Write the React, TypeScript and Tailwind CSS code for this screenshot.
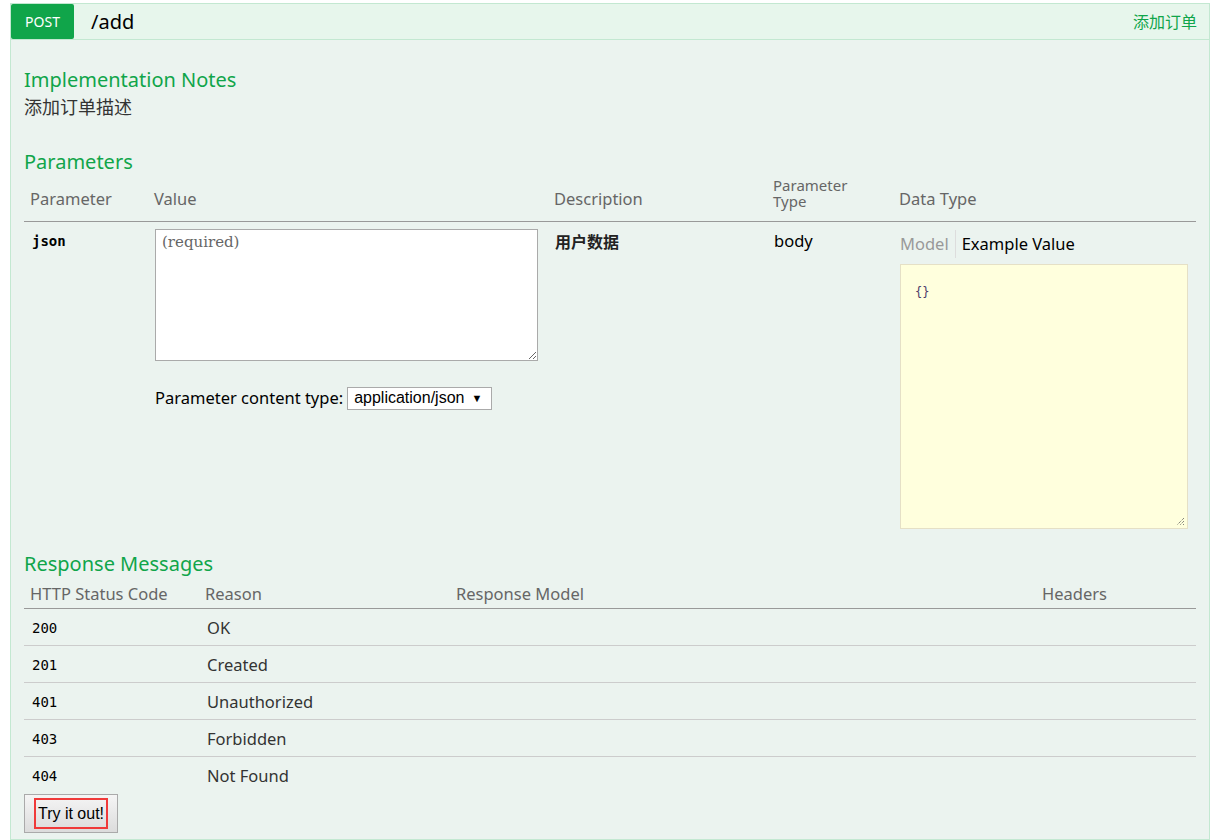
import React from 'react';

const font = { fontFamily: '"Noto Sans", "Noto Sans CJK SC", sans-serif' };
const mono = 'font-["DejaVu_Sans_Mono","Liberation_Mono",monospace]';

const responses = [
  ['200', 'OK'],
  ['201', 'Created'],
  ['401', 'Unauthorized'],
  ['403', 'Forbidden'],
  ['404', 'Not Found'],
];

function Grip() {
  return (
    <svg className="absolute right-[2px] bottom-[2px]" width="9" height="9" viewBox="0 0 9 9">
      <path d="M8 1 L1 8 M8 4 L4 8 M8 7 L7 8" stroke="#555" strokeWidth="1" strokeDasharray="1 1" />
    </svg>
  );
}

export default function App() {
  return (
    <div className="bg-white min-h-[840px] pt-[3px] pl-[10px] w-[1219px]" style={font}>
      <div className="w-[1200px] border border-[#c3e8d1] bg-[#ebf3ef]">
        <div className="h-[36px] flex items-center bg-[#e7f6ec] border-b border-[#c3e8d1]">
          <span className="h-[35px] w-[63px] bg-[#10a54a] text-white text-[14px] rounded-[2px] flex items-center justify-center mt-[-1px]">
            POST
          </span>
          <span className="ml-[17px] text-[20px] text-black">/add</span>
          <span className="ml-auto mr-[12px] text-[16px] text-[#10a54a]">添加订单</span>
        </div>

        <div className="px-[13px] pt-[27px]">
          <h4 className="text-[20px] leading-[26px] text-[#10a54a]">Implementation Notes</h4>
          <p className="text-[18px] leading-[28px] text-[#333]">添加订单描述</p>

          <h4 className="mt-[28px] text-[20px] leading-[26px] text-[#10a54a]">Parameters</h4>
          <div className="mt-[2px] grid grid-cols-[124px_400px_219px_126px_1fr] border-b border-[#999] items-end text-[#666] pb-[11px] text-[16.5px] leading-[22px]">
            <div className="pl-[6px]">Parameter</div>
            <div className="pl-[6px]">Value</div>
            <div className="pl-[6px]">Description</div>
            <div className="pl-[6px] text-[15px] leading-[16px] flex flex-col pb-[1px]">
              <span>Parameter</span>
              <span>Type</span>
            </div>
            <div className="pl-[6px]">Data Type</div>
          </div>
          <div className="grid grid-cols-[124px_400px_219px_126px_1fr] pt-[7px] pb-[22px]">
            <div className={`pl-[8px] pt-[2px] text-[14px] font-bold text-black ${mono}`}>json</div>
            <div className="pl-[7px]">
              <textarea
                placeholder="(required)"
                className='block w-[383px] h-[132px] bg-white border border-[#aaa] px-[6px] py-[1px] text-[15px] placeholder:text-[#666] font-["DejaVu_Serif",serif]'
              />
              <div className="mt-[25px] flex items-center text-[16.5px] text-black">
                <span>Parameter content type:</span>
                <span className='ml-[4px] h-[23px] w-[145px] border border-[#aaa] bg-white flex items-center pl-[6px] text-[16px] font-["Liberation_Sans",sans-serif]'>
                  application/json
                  <span className="ml-[7px] text-[11px]">▼</span>
                </span>
              </div>
            </div>
            <div className="pl-[7px] pt-[1px] text-[16px] font-bold text-[#222]">用户数据</div>
            <div className="pl-[7px] text-[16.5px] text-black">body</div>
            <div className="pl-[7px]">
              <div className="flex items-center text-[16.5px] pt-[1px]">
                <span className="text-[#999] pr-[6px] border-r border-[#ddd] leading-[28px]">Model</span>
                <span className="pl-[6px] text-black">Example Value</span>
              </div>
              <div className="mt-[6px] h-[265px] w-[288px] bg-[#ffffdd] border border-[#e5e0c6] px-[14px] py-[13px] relative">
                <span className={`text-[12px] text-[#4b3a6b] ${mono}`}>{'{}'}</span>
                <Grip />
              </div>
            </div>
          </div>

          <h4 className="text-[20px] leading-[26px] text-[#10a54a]">Response Messages</h4>
          <div className="mt-[6px] grid grid-cols-[175px_251px_586px_1fr] border-b border-[#999] text-[16.5px] leading-[22px] text-[#666] pb-[3px]">
            <div className="pl-[6px]">HTTP Status Code</div>
            <div className="pl-[6px]">Reason</div>
            <div className="pl-[6px]">Response Model</div>
            <div className="pl-[6px]">Headers</div>
          </div>
          {responses.map(([code, reason], i) => (
            <div
              key={code}
              className={`grid grid-cols-[175px_251px_586px_1fr] h-[37px] items-center ${
                i < responses.length - 1 ? 'border-b border-[#ccc]' : ''
              }`}
            >
              <div className={`pl-[8px] pt-[2px] text-[14px] text-black ${mono}`}>{code}</div>
              <div className="pl-[8px] pt-[2px] text-[16.5px] text-[#333]">{reason}</div>
              <div />
              <div />
            </div>
          ))}
          <div className="pb-[6px]">
            <button className='w-[94px] h-[39px] border border-[#aaa] bg-gradient-to-b from-[#f5f5f5] to-[#dcdcdc] flex items-center justify-center font-["Liberation_Sans",sans-serif] text-[16px] text-black'>
              <span className="border-2 border-[#f03a3a] px-[2px] h-[31px] flex items-center">Try it out!</span>
            </button>
          </div>
        </div>
      </div>
    </div>
  );
}
